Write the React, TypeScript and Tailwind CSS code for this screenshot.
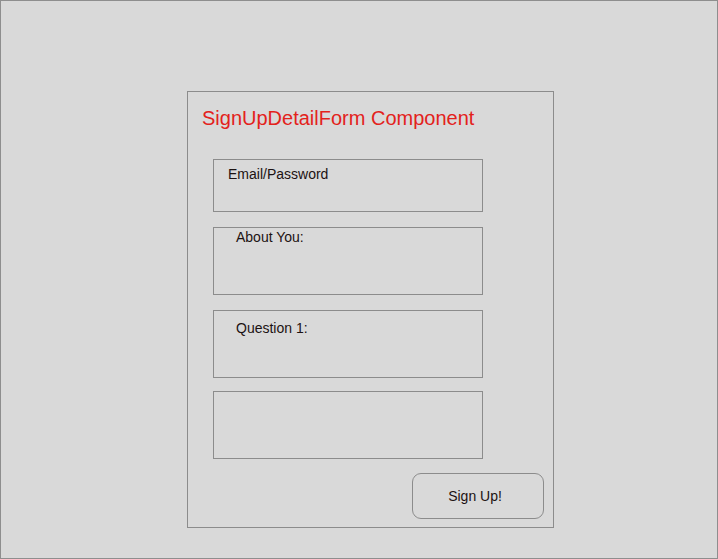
const font = { fontFamily: '"Liberation Sans", Arial, sans-serif' };

const Box = ({ label, className, labelClass }: { label?: string; className: string; labelClass?: string }) => (
  <div className={`ml-[25px] w-[270px] border border-[#8c8c8c] ${className}`}>
    {label && <div className={`text-[14px] leading-[16px] text-[#1c1212] ${labelClass}`}>{label}</div>}
  </div>
);

export default function App() {
  return (
    <div
      className="w-[718px] h-[559px] border border-[#8e8e8e] bg-[#d9d9d9] pl-[186px] pt-[90px]"
      style={font}
    >
      <div className="w-[367px] h-[437px] border border-[#8c8c8c] flex flex-col">
        <h1 className="ml-[14px] mt-[14px] text-[20px] leading-[24px] text-[#e3221c]">
          SignUpDetailForm Component
        </h1>
        <Box label="Email/Password" className="mt-[29px] h-[53px]" labelClass="pl-[14px] pt-[6px]" />
        <Box label="About You:" className="mt-[15px] h-[68px]" labelClass="pl-[22px] pt-[1px]" />
        <Box label="Question 1:" className="mt-[15px] h-[68px]" labelClass="pl-[22px] pt-[9px]" />
        <Box className="mt-[13px] h-[68px]" />
        <div className="flex justify-end pr-[9px] mt-[14px]">
          <button className="w-[132px] h-[46px] rounded-[9px] border border-[#8c8c8c] pr-[6px] text-[14px] text-[#1c1212]">
            Sign Up!
          </button>
        </div>
      </div>
    </div>
  );
}
